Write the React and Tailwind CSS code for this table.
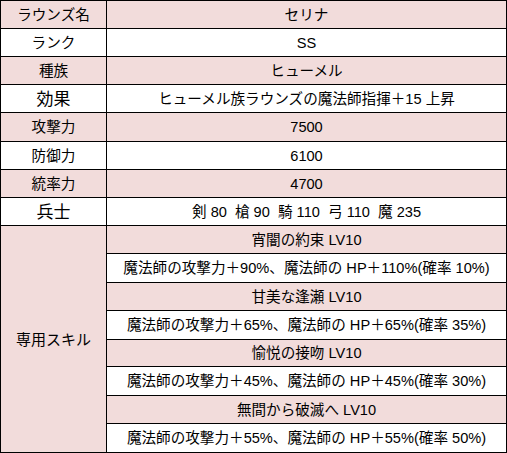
import React from "react";

const P = "bg-[#f2dcdb]";
const W = "bg-white";

function Cell({ bg, className = "", children }) {
  return (
    <div className={`${bg} flex items-center justify-center whitespace-pre pt-px ${className}`}>
      {children}
    </div>
  );
}

export default function App() {
  const top = [
    ["ラウンズ名", "セリナ", P],
    ["ランク", "SS", W],
    ["種族", "ヒューメル", P],
    ["効果", "ヒューメル族ラウンズの魔法師指揮＋15 上昇", W, true],
    ["攻撃力", "7500", P],
    ["防御力", "6100", W],
    ["統率力", "4700", P],
    ["兵士", "剣 80  槍 90  騎 110  弓 110  魔 235", W, true],
  ];
  const skills = [
    ["宵闇の約束 LV10", "魔法師の攻撃力＋90%、魔法師の HP＋110%(確率 10%)"],
    ["甘美な逢瀬 LV10", "魔法師の攻撃力＋65%、魔法師の HP＋65%(確率 35%)"],
    ["愉悦の接吻 LV10", "魔法師の攻撃力＋45%、魔法師の HP＋45%(確率 30%)"],
    ["無間から破滅へ LV10", "魔法師の攻撃力＋55%、魔法師の HP＋55%(確率 50%)"],
  ];
  return (
    <div className="w-[507px] h-[453px] bg-white font-['Liberation_Sans','Noto_Sans_CJK_JP',sans-serif] text-[14.6px] text-black leading-none">
      <div className="grid grid-cols-[105px_399px] grid-rows-[27px_27px_27px_27px_28px_27px_27px_27px_27px_28px_27px_28px_26px_28px_27px_28px] gap-px p-px bg-black w-[507px] h-[453px]">
        {top.map(([l, r, bg, big]) => (
          <React.Fragment key={l}>
            <Cell bg={bg} className={big ? "text-[17px]" : ""}>{l}</Cell>
            <Cell bg={bg}>{r}</Cell>
          </React.Fragment>
        ))}
        <div className={`${P} row-span-8 col-start-1 row-start-9 flex items-center justify-center text-[15px]`}>
          専用スキル
        </div>
        {skills.map(([n, d]) => (
          <React.Fragment key={n}>
            <Cell bg={P} className="col-start-2">{n}</Cell>
            <Cell bg={W} className="col-start-2">{d}</Cell>
          </React.Fragment>
        ))}
      </div>
    </div>
  );
}
